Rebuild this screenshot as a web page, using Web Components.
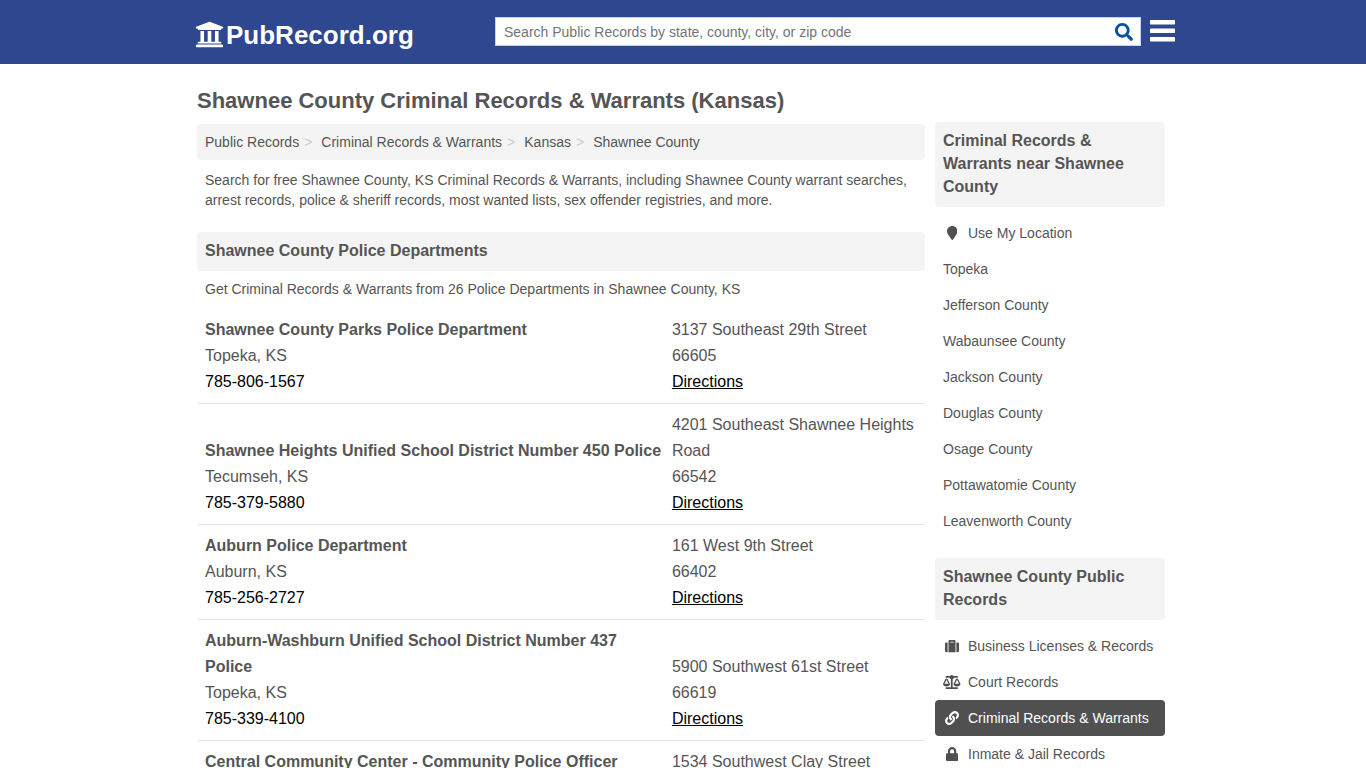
<!DOCTYPE html>
<html lang="en">
<head>
<meta charset="utf-8">
<meta name="viewport" content="width=device-width, initial-scale=1">
<title>Shawnee County Criminal Records &amp; Warrants (Kansas)</title>
<style>
  body { margin: 0; background: #fff; color: #555; font: 14px/20px "Liberation Sans", Arial, sans-serif; --page: 972px; --dark: #505050; --panel: #f4f4f4; }
</style>
</head>
<body>
<pr-header></pr-header>
<pr-layout>
  <pr-title>Shawnee County Criminal Records &amp; Warrants (Kansas)</pr-title>
  <pr-breadcrumb></pr-breadcrumb>
  <pr-text>Search for free Shawnee County, KS Criminal Records &amp; Warrants, including Shawnee County warrant searches, arrest records, police &amp; sheriff records, most wanted lists, sex offender registries, and more.</pr-text>
  <pr-section>Shawnee County Police Departments</pr-section>
  <pr-text>Get Criminal Records &amp; Warrants from 26 Police Departments in Shawnee County, KS</pr-text>
  <pr-departments></pr-departments>
  <pr-menu slot="side" heading="Criminal Records &amp; Warrants near Shawnee County">
    <pr-item icon="marker">Use My Location</pr-item>
    <pr-item>Topeka</pr-item>
    <pr-item>Jefferson County</pr-item>
    <pr-item>Wabaunsee County</pr-item>
    <pr-item>Jackson County</pr-item>
    <pr-item>Douglas County</pr-item>
    <pr-item>Osage County</pr-item>
    <pr-item>Pottawatomie County</pr-item>
    <pr-item>Leavenworth County</pr-item>
  </pr-menu>
  <pr-menu slot="side" heading="Shawnee County Public Records">
    <pr-item icon="suitcase">Business Licenses &amp; Records</pr-item>
    <pr-item icon="scale">Court Records</pr-item>
    <pr-item icon="link" active>Criminal Records &amp; Warrants</pr-item>
    <pr-item icon="lock">Inmate &amp; Jail Records</pr-item>
  </pr-menu>
</pr-layout>

<script>
const ICONS = {
  university: [512, "M496 128v16a8 8 0 0 1-8 8h-24v12c0 6.627-5.373 12-12 12H60c-6.627 0-12-5.373-12-12v-12H24a8 8 0 0 1-8-8v-16a8 8 0 0 1 4.941-7.392l232-88a7.996 7.996 0 0 1 6.118 0l232 88A8 8 0 0 1 496 128zm-24 304H40c-13.255 0-24 10.745-24 24v16a8 8 0 0 0 8 8h464a8 8 0 0 0 8-8v-16c0-13.255-10.745-24-24-24zM96 192v192H60c-6.627 0-12 5.373-12 12v20h416v-20c0-6.627-5.373-12-12-12h-36V192h-64v192h-64V192h-64v192h-64V192H96z"],
  search: [512, "M505 442.7L405.3 343c-4.5-4.5-10.6-7-17-7H372c27.6-35.3 44-79.7 44-128C416 93.1 322.9 0 208 0S0 93.1 0 208s93.1 208 208 208c48.3 0 92.7-16.4 128-44v16.3c0 6.4 2.5 12.5 7 17l99.7 99.7c9.4 9.4 24.6 9.4 33.9 0l28.3-28.3c9.4-9.4 9.4-24.6.1-34zM208 336c-70.7 0-128-57.2-128-128 0-70.7 57.2-128 128-128 70.7 0 128 57.2 128 128 0 70.7-57.2 128-128 128z"],
  bars: [512, "M10 0h492a10 10 0 0 1 10 10v72a10 10 0 0 1-10 10H10A10 10 0 0 1 0 82V10A10 10 0 0 1 10 0zM10 174h492a10 10 0 0 1 10 10v72a10 10 0 0 1-10 10H10a10 10 0 0 1-10-10v-72a10 10 0 0 1 10-10zM10 348h492a10 10 0 0 1 10 10v72a10 10 0 0 1-10 10H10a10 10 0 0 1-10-10v-72a10 10 0 0 1 10-10z"],
  marker: [384, "M172.268 501.67C26.97 291.031 0 269.413 0 192 0 85.961 85.961 0 192 0s192 85.961 192 192c0 77.413-26.97 99.031-172.268 309.67-9.535 13.774-29.93 13.773-39.464 0z"],
  suitcase: [512, "M128 480h256V80c0-26.5-21.5-48-48-48H176c-26.5 0-48 21.5-48 48v400zm64-384h128v32H192V96zm320 80v256c0 26.5-21.5 48-48 48h-48V128h48c26.5 0 48 21.5 48 48zM96 480H48c-26.5 0-48-21.5-48-48V176c0-26.5 21.5-48 48-48h48v352z"],
  scale: [640, "M256 336h-.02c0-16.18 1.34-8.73-85.05-181.51-17.65-35.29-68.19-35.36-85.87 0C-2.06 328.75.02 320.33.02 336H0c0 44.18 57.31 80 128 80s128-35.82 128-80zM128 176l72 144H56l72-144zm511.98 160c0-16.18 1.34-8.73-85.05-181.51-17.65-35.29-68.19-35.36-85.87 0-87.12 174.26-85.04 165.84-85.04 181.51H384c0 44.18 57.31 80 128 80s128-35.82 128-80h-.02zM440 320l72-144 72 144H440zm88 128H352V153.25c23.51-10.29 41.16-31.48 46.39-57.25H528c8.84 0 16-7.16 16-16V48c0-8.84-7.16-16-16-16H383.64C369.04 12.68 346.09 0 320 0s-49.04 12.68-63.64 32H112c-8.84 0-16 7.16-16 16v32c0 8.84 7.16 16 16 16h129.61c5.23 25.76 22.87 46.96 46.39 57.25V448H112c-8.84 0-16 7.16-16 16v32c0 8.84 7.16 16 16 16h416c8.84 0 16-7.16 16-16v-32c0-8.84-7.16-16-16-16z"],
  link: [512, "M326.612 185.391c59.747 59.809 58.927 155.698.36 214.59-.11.12-.24.25-.36.37l-67.2 67.2c-59.27 59.27-155.699 59.262-214.96 0-59.27-59.26-59.27-155.7 0-214.96l37.106-37.106c9.84-9.84 26.786-3.3 27.294 10.606.648 17.722 3.826 35.527 9.69 52.721 1.986 5.822.567 12.262-3.783 16.612l-13.087 13.087c-28.026 28.026-28.905 73.66-1.155 101.96 28.024 28.579 74.086 28.749 102.325.51l67.2-67.19c28.191-28.191 28.073-73.757 0-101.83-3.701-3.694-7.429-6.564-10.341-8.569a16.037 16.037 0 0 1-6.947-12.606c-.396-10.567 3.348-21.456 11.698-29.806l21.054-21.055c5.521-5.521 14.182-6.199 20.584-1.731a152.482 152.482 0 0 1 20.522 17.197zM467.547 44.449c-59.261-59.262-155.69-59.27-214.96 0l-67.2 67.2c-.12.12-.25.25-.36.37-58.566 58.892-59.387 154.781.36 214.59a152.454 152.454 0 0 0 20.521 17.196c6.402 4.468 15.064 3.789 20.584-1.731l21.054-21.055c8.35-8.35 12.094-19.239 11.698-29.806a16.037 16.037 0 0 0-6.947-12.606c-2.912-2.005-6.64-4.875-10.341-8.569-28.073-28.073-28.191-73.639 0-101.83l67.2-67.19c28.239-28.239 74.3-28.069 102.325.51 27.75 28.3 26.872 73.934-1.155 101.96l-13.087 13.087c-4.35 4.35-5.769 10.79-3.783 16.612 5.864 17.194 9.042 34.999 9.69 52.721.509 13.906 17.454 20.446 27.294 10.606l37.106-37.106c59.271-59.259 59.271-155.699.001-214.959z"],
  lock: [448, "M400 224h-24v-72C376 68.2 307.8 0 224 0S72 68.2 72 152v72H48c-26.5 0-48 21.5-48 48v192c0 26.5 21.5 48 48 48h352c26.5 0 48-21.5 48-48V272c0-26.5-21.5-48-48-48zm-104 0H152v-72c0-39.7 32.3-72 72-72s72 32.3 72 72v72z"]
};
const icon = n => `<svg viewBox="0 0 ${ICONS[n][0]} 512" fill="currentColor" aria-hidden="true"><path d="${ICONS[n][1]}"/></svg>`;

/* Registers an element whose shadow root holds the given style and markup. */
function define(name, css, html) {
  customElements.define(name, class extends HTMLElement {
    constructor() {
      super();
      this.attachShadow({ mode: "open" });
    }
    connectedCallback() {
      this.shadowRoot.innerHTML = `<style>*{box-sizing:border-box}${css}</style>` + (typeof html === "function" ? html(this) : html);
    }
  });
}

define("pr-header", `
  :host { display: block; background: #2e478e; color: #fff; }
  .bar { display: flex; align-items: center; max-width: var(--page); height: 64px; margin: 0 auto; }
  .logo { display: flex; align-items: center; gap: 2px; flex: 1; margin-left: -2px; color: inherit; text-decoration: none; font: bold 26px/30px "Liberation Sans", Arial, sans-serif; }
  .logo span { padding-top: 6px; }
  .logo svg { width: 29px; height: 29px; margin-top: 4px; }
  form { display: flex; flex: 0 1 646px; height: 29px; margin-bottom: 2px; background: #fff; border: 1px solid #c3d4f2; }
  input { flex: 1; min-width: 0; border: 0; outline: 0; padding: 2px 8px 0; background: none; color: #555; font: 14px/20px "Liberation Sans", Arial, sans-serif; }
  input::placeholder { color: #757575; }
  button { display: flex; align-items: center; justify-content: center; border: 0; background: none; padding: 0; cursor: pointer; }
  .go { width: 32px; padding-top: 2px; color: #05519e; }
  .go svg { width: 18px; height: 18px; }
  .menu { color: #fff; margin: 0 -6px 0 9px; }
  .menu svg { width: 25px; height: 25px; }
`, `
  <header class="bar">
    <a class="logo" href="#">${icon("university")}<span>PubRecord.org</span></a>
    <form role="search">
      <input type="text" aria-label="Search Public Records" placeholder="Search Public Records by state, county, city, or zip code">
      <button class="go" type="button" aria-label="Search">${icon("search")}</button>
    </form>
    <button class="menu" type="button" aria-label="Menu">${icon("bars")}</button>
  </header>`);

define("pr-layout", `
  :host { display: block; }
  .grid { display: grid; grid-template-columns: minmax(0, 1fr) 230px; gap: 10px; max-width: var(--page); margin: 0 auto; padding: 22px 4px 0 0; }
  aside { display: flex; flex-direction: column; gap: 19px; padding-top: 36px; }
`, `<div class="grid"><main><slot></slot></main><aside><slot name="side"></slot></aside></div>`);

define("pr-title", `
  :host { display: block; }
  h1 { margin: 0 0 8px; font-size: 22px; line-height: 30px; }
`, `<h1><slot></slot></h1>`);

define("pr-breadcrumb", `
  :host { display: block; background: var(--panel); border-radius: 4px; padding: 8px; margin-bottom: 2px; }
  ol { display: flex; flex-wrap: wrap; list-style: none; margin: 0; padding: 0; }
  li + li::before { content: ">"; color: #ccc; padding: 0 9px 0 5px; }
  a { color: inherit; text-decoration: none; }
`, `<nav aria-label="Breadcrumb"><ol>${["Public Records", "Criminal Records & Warrants", "Kansas", "Shawnee County"]
  .map(t => `<li><a href="#">${t.replace("&", "&amp;")}</a></li>`).join("")}</ol></nav>`);

define("pr-text", `
  :host { display: block; padding: 8px; }
  p { margin: 0; }
`, `<p><slot></slot></p>`);

define("pr-section", `
  :host { display: block; background: var(--panel); border-radius: 4px; padding: 7px 8px 9px; margin-top: 14px; }
  h2 { margin: 0; font-size: 16px; line-height: 23px; }
`, `<h2><slot></slot></h2>`);

const DEPARTMENTS = [
  ["Shawnee County Parks Police Department", "Topeka, KS", "785-806-1567", "3137 Southeast 29th Street", "66605"],
  ["Shawnee Heights Unified School District Number 450 Police", "Tecumseh, KS", "785-379-5880", "4201 Southeast Shawnee Heights Road", "66542"],
  ["Auburn Police Department", "Auburn, KS", "785-256-2727", "161 West 9th Street", "66402"],
  ["Auburn-Washburn Unified School District Number 437 Police", "Topeka, KS", "785-339-4100", "5900 Southwest 61st Street", "66619"],
  ["Central Community Center - Community Police Officer", "Topeka, KS", "", "1534 Southwest Clay Street", ""]
];
define("pr-departments", `
  :host { display: block; margin-top: 2px; }
  table { width: 100%; table-layout: fixed; border-collapse: separate; border-spacing: 0; font-size: 16px; line-height: 26px; }
  td { padding: 8px 0 8px 8px; border-bottom: 1px solid #e8e8e8; vertical-align: bottom; }
  td:first-child { width: 64%; }
  td:last-child { padding-left: 9px; }
  td > * { display: block; }
  .tel { color: #000; text-decoration: none; }
  .dir { color: #000; width: fit-content; }
`, `<table><tbody>${DEPARTMENTS.map(([name, city, tel, street, zip]) => `
  <tr><td><strong>${name}</strong><span>${city}</span>${tel && `<a class="tel" href="tel:${tel}">${tel}</a>`}</td>
  <td><span>${street}</span>${zip && `<span>${zip}</span>`}<a class="dir" href="#">Directions</a></td></tr>`).join("")}</tbody></table>`);

define("pr-menu", `
  :host { display: block; }
  h2 { margin: 0 0 8px; padding: 7px 8px 9px; background: var(--panel); border-radius: 4px; font-size: 16px; line-height: 23px; }
`, el => `<h2>${el.getAttribute("heading").replace("&", "&amp;")}</h2><nav><slot></slot></nav>`);

define("pr-item", `
  :host { display: block; }
  a { display: flex; align-items: center; padding: 8px; border-radius: 4px; color: inherit; text-decoration: none; }
  :host([active]) a { background: var(--dark); color: #fff; }
  i { display: flex; justify-content: center; width: 18px; margin-right: 7px; color: var(--dark); }
  :host([active]) i { color: #fff; }
  svg { height: 14px; }
`, el => `<a href="#">${el.hasAttribute("icon") ? `<i>${icon(el.getAttribute("icon"))}</i>` : ""}<slot></slot></a>`);
</script>
</body>
</html>
